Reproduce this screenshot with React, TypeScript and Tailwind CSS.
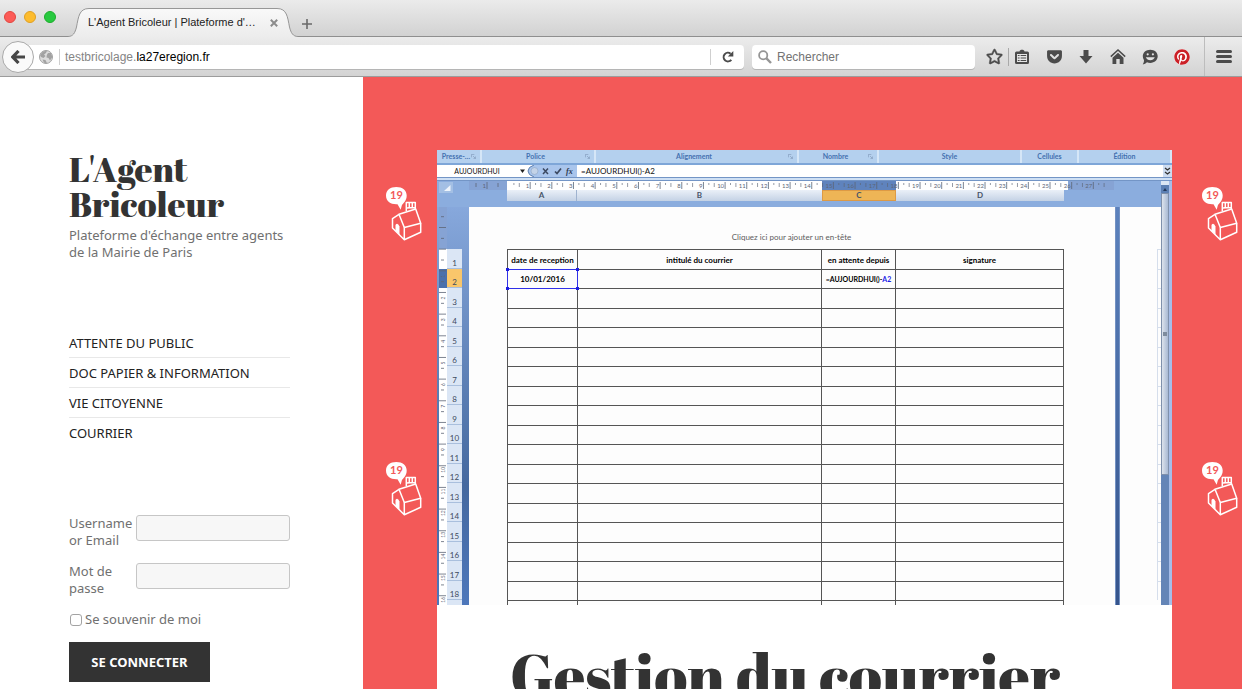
import type { ReactNode } from "react";
import { FaGetPocket, FaPinterest, FaRegStar } from "react-icons/fa";

const sansFont = "font-['Noto_Sans',sans-serif]";
const uiFont = "font-['Liberation_Sans',Arial,sans-serif]";
const titleFont = "font-['Abril_Fatface','Liberation_Serif',serif]";
const sheetFont = "font-['Lato',sans-serif]";

const menu = ["Attente du public", "Doc papier & information", "Vie citoyenne", "Courrier"];

const ribbon = [
  { label: "Presse-…", width: "w-[45px]", launcher: true },
  { label: "Police", width: "w-[114px]", launcher: true },
  { label: "Alignement", width: "w-[203px]", launcher: true },
  { label: "Nombre", width: "w-[80px]", launcher: true },
  { label: "Style", width: "w-[143px]", launcher: false },
  { label: "Cellules", width: "w-[57px]", launcher: false },
  { label: "Édition", width: "flex-1", launcher: false },
];

const rows = Array.from({ length: 18 }, (_, i) => i + 1);
const rowHeight = (n: number) => (n % 2 ? "h-[20px]" : "h-[19px]");

function ToolButton({ label, children }: { label: string; children: ReactNode }) {
  return (
    <button type="button" aria-label={label} className="flex h-6 w-8 shrink-0 items-center justify-center text-[#4b4b4b]">
      {children}
    </button>
  );
}

function TabBar() {
  return (
    <div className="flex h-[37px] shrink-0 items-end border-b border-[#8f8f8f] bg-linear-to-b from-[#ebebeb] to-[#d2d2d2]">
      <div className="flex gap-2 self-start pt-[11px] pl-1">
        <button type="button" aria-label="Fermer la fenêtre" className="size-3 rounded-full border border-[#e2463f] bg-[#fc5b57]" />
        <button type="button" aria-label="Réduire" className="size-3 rounded-full border border-[#dfa023] bg-[#fdbc2e]" />
        <button type="button" aria-label="Agrandir" className="size-3 rounded-full border border-[#1dad2b] bg-[#28c940]" />
      </div>
      <div className="relative -mb-px ml-3 h-[29px] w-[230px]">
        <svg viewBox="0 0 230 29" className="absolute inset-0 size-full" aria-hidden="true">
          <defs>
            <linearGradient id="tab" x1="0" y1="0" x2="0" y2="1">
              <stop offset="0" stopColor="#f9f9f9" />
              <stop offset="1" stopColor="#ececec" />
            </linearGradient>
          </defs>
          <path
            d="M0 28.5C5 28.5 7 25 8.500 19C10.500 9 11 .5 21 .5H209C219 .5 219.500 9 221.500 19C223 25 225 28.500 230 28.500V29H0Z"
            fill="url(#tab)"
          />
          <path
            d="M0 28.5C5 28.5 7 25 8.500 19C10.500 9 11 .5 21 .5H209C219 .5 219.500 9 221.500 19C223 25 225 28.500 230 28.500"
            fill="none"
            stroke="#979797"
          />
        </svg>
        <div className="relative flex h-full items-center pr-4 pl-5">
          <span className="flex-1 text-[11px] whitespace-nowrap text-[#222]">L'Agent Bricoleur | Plateforme d'…</span>
          <button type="button" aria-label="Fermer l'onglet" className="flex size-4 items-center justify-center">
            <svg viewBox="0 0 8 8" className="size-2" aria-hidden="true">
              <path d="M.8 .8L7.200 7.200M7.200 .8L.8 7.200" stroke="#8c8c8c" strokeWidth="2" />
            </svg>
          </button>
        </div>
      </div>
      <button type="button" aria-label="Nouvel onglet" className="mb-[6px] ml-[3px] flex size-3 items-center justify-center">
        <svg viewBox="0 0 10 10" className="size-[10px]" aria-hidden="true">
          <path d="M5 0V10M0 5H10" stroke="#6a6a6a" strokeWidth="1.600" />
        </svg>
      </button>
    </div>
  );
}

function Toolbar() {
  return (
    <div className="flex h-10 shrink-0 items-center border-b border-[#9c9c9c] bg-linear-to-b from-[#ececec] to-[#d3d3d3] pl-[2px]">
      <button
        type="button"
        aria-label="Page précédente"
        className="z-10 flex size-8 shrink-0 items-center justify-center rounded-full border border-[#a9a9a9] bg-[#fafafa]"
      >
        <svg viewBox="0 0 14 14" className="size-[14px]" aria-hidden="true">
          <path d="M7.500 1L1.800 7L7.500 13M2.500 7H14" fill="none" stroke="#474747" strokeWidth="3.200" />
        </svg>
      </button>
      <div className="-ml-3 flex h-6 flex-1 items-center rounded-sm bg-white pl-[17px] shadow-[0_1px_0_#b5b5b5]">
        <svg viewBox="0 0 14 14" className="size-[14px] shrink-0" aria-hidden="true">
          <circle cx="7" cy="7" r="6.500" fill="#dcdcdc" stroke="#a2a2a2" />
          <path d="M1 5L4 1.500L8 .8L7 3L5 4.500L6.500 6L4.500 8L2 7Z" fill="#a2a2a2" />
          <path d="M9 3L12 3L13.300 7L11 10.500L9.500 8L7.500 7.500L7.800 5Z" fill="#a2a2a2" />
          <path d="M3.500 9.500L6.500 10L8 13.200L5 12.800Z" fill="#a2a2a2" />
        </svg>
        <label className="ml-[6px] flex h-full flex-1 items-center">
          <span className="relative flex h-4 w-full items-center border-l border-[#cfcfcf] pl-[5px] text-[12px] leading-4">
            <span aria-hidden="true" className="text-black">
              <span className="text-[#858585]">testbricolage.</span>la27eregion.fr
            </span>
            <input
              aria-label="Adresse"
              defaultValue="testbricolage.la27eregion.fr"
              className="absolute inset-0 w-full bg-transparent pl-[5px] text-transparent outline-none"
            />
          </span>
        </label>
        <button type="button" aria-label="Actualiser" className="flex h-4 w-[34px] items-center justify-center border-l border-[#cfcfcf]">
          <svg viewBox="0 0 12 12" className="size-3" aria-hidden="true">
            <path d="M9.300 8.800A4.300 4.300 0 1 1 8.600 2.700" fill="none" stroke="#4b4b4b" strokeWidth="2" />
            <path d="M11.300 0V5.500H5.800Z" fill="#4b4b4b" />
          </svg>
        </button>
      </div>
      <label className="ml-2 flex h-6 w-[223px] items-center rounded-sm bg-white pl-[6px] shadow-[0_1px_0_#b5b5b5]">
        <svg viewBox="0 0 14 14" className="size-[14px] shrink-0" aria-hidden="true">
          <circle cx="5.200" cy="5.200" r="4.100" fill="none" stroke="#959595" strokeWidth="1.800" />
          <path d="M8.200 8.200L13 13" stroke="#959595" strokeWidth="2.400" />
        </svg>
        <input
          aria-label="Rechercher"
          placeholder="Rechercher"
          className="w-full pl-[5px] text-[12px] outline-none placeholder:text-[#737373]"
        />
      </label>
      <button type="button" aria-label="Marquer cette page" className="ml-[10px] flex h-6 w-[18px] items-center justify-center text-[#4b4b4b]">
        <FaRegStar size={17} className="overflow-visible stroke-current stroke-[16px]" />
      </button>
      <div className="ml-[5px] h-[18px] w-px bg-[#a9a9a9]" />
      <div className="-ml-[3px] flex">
        <ToolButton label="Marque-pages">
          <svg viewBox="0 0 14 15" className="h-[15px] w-[14px]" aria-hidden="true">
            <path d="M4.500 2.500C4.500 .3 9.500 .3 9.500 2.500H12.500Q14 2.500 14 4V13.500Q14 15 12.500 15H1.500Q0 15 0 13.500V4Q0 2.500 1.500 2.500Z" fill="currentColor" />
            <path d="M2 5H12V13H2Z" fill="#e6e6e6" />
            <path d="M2.800 6.500H4.600M5.600 6.500H11.200M2.800 9H4.600M5.600 9H11.200M2.800 11.500H4.600M5.600 11.500H11.200" stroke="currentColor" strokeWidth="1" />
          </svg>
        </ToolButton>
        <ToolButton label="Pocket">
          <FaGetPocket size={17} />
        </ToolButton>
        <ToolButton label="Téléchargements">
          <svg viewBox="0 0 14 14" className="size-[14px]" aria-hidden="true">
            <path d="M4.500 0H9.500V6H13.500L7 13.500L.5 6H4.500Z" fill="currentColor" />
          </svg>
        </ToolButton>
        <ToolButton label="Accueil">
          <svg viewBox="0 0 16 15" className="h-[15px] w-4" aria-hidden="true">
            <path d="M.8 7.600L8 1L15.200 7.600" fill="none" stroke="currentColor" strokeWidth="1.500" />
            <path d="M8 3.800L13.500 8.800V15H9.700V10H6.300V15H2.500V8.800Z" fill="currentColor" />
          </svg>
        </ToolButton>
        <ToolButton label="Discussion">
          <svg viewBox="0 0 16 16" className="size-4" aria-hidden="true">
            <path d="M8.300 .8C12.600 .8 15.700 3.600 15.700 7.300S12.600 13.900 8.300 13.900Q6.500 13.900 5 13.200Q3.300 15.300 .8 15.500Q2.200 13.600 2 11.300Q.8 9.500 .8 7.300C.8 3.600 4 .8 8.300 .8Z" fill="currentColor" />
            <circle cx="5.700" cy="5.300" r="1.100" fill="#e2e2e2" />
            <circle cx="10.900" cy="5.300" r="1.100" fill="#e2e2e2" />
            <path d="M3.800 8.200H12.800Q11.500 11.200 8.300 11.200T3.800 8.200Z" fill="#e2e2e2" />
          </svg>
        </ToolButton>
        <ToolButton label="Pinterest">
          <span className="rounded-full bg-white text-[#cb2027]">
            <FaPinterest size={16} />
          </span>
        </ToolButton>
      </div>
      <div className="ml-[6px] flex h-full items-center border-l border-[#bdbdbd]">
        <button type="button" aria-label="Menu" className="flex h-6 w-[37px] items-center justify-center">
          <svg viewBox="0 0 16 13" className="h-[13px] w-4" aria-hidden="true">
            <path d="M1.500 1.500H14.500M1.500 6.500H14.500M1.500 11.500H14.500" stroke="#4b4b4b" strokeWidth="3" strokeLinecap="round" />
          </svg>
        </button>
      </div>
    </div>
  );
}

function Field({ id, label, type }: { id: string; label: string; type: string }) {
  return (
    <div className="flex items-start">
      <label htmlFor={id} className="w-[67px] shrink-0">
        {label}
      </label>
      <input id={id} type={type} className="h-[26px] w-full min-w-0 rounded-[3px] border border-[#c6c6c6] bg-[#f7f7f7] px-1" />
    </div>
  );
}

function Sidebar() {
  return (
    <aside className="w-[363px] shrink-0 bg-white pr-[73px] pl-[69px] text-[13px] leading-[17px] text-[#707070]">
      <h2 className={`pt-[74px] text-[35px] leading-[35px] text-[#333] ${titleFont}`}>
        <a href="#accueil">L'Agent Bricoleur</a>
      </h2>
      <p className="mt-[6px]">Plateforme d'échange entre agents de la Mairie de Paris</p>
      <nav className="mt-[67px] divide-y divide-[#e8e8e8] text-[#222] uppercase">
        {menu.map((item) => (
          <a key={item} href="#menu" className="block pt-[7px] pb-[5px]">
            {item}
          </a>
        ))}
      </nav>
      <form className="mt-[68px] flex flex-col gap-[14px]" onSubmit={(e) => e.preventDefault()}>
        <Field id="user" label="Username or Email" type="text" />
        <Field id="pass" label="Mot de passe" type="password" />
        <label className="flex items-center gap-[3px]">
          <input type="checkbox" className="ml-px size-3 appearance-none rounded-[3px] border border-[#a3a3a3] bg-white" />
          Se souvenir de moi
        </label>
        <button type="submit" className="h-10 w-[141px] bg-[#333] text-[13px] font-bold text-white uppercase">
          Se connecter
        </button>
      </form>
    </aside>
  );
}

function House() {
  return (
    <svg viewBox="0 0 36 55" className="h-[55px] w-9 shrink-0" aria-hidden="true">
      <path d="M10.300 1C16.500 1 20.700 4.300 20.700 9.600C20.700 15 17 17.500 15.800 19.500L14.700 23.700L11.500 18.300C5 18.800 0 15.500 0 9.600C0 4.300 4.100 1 10.300 1Z" fill="#fff" />
      <text x="10.400" y="13.400" textAnchor="middle" fontSize="11" fontWeight="700" fill="#f35958" className={sheetFont}>
        19
      </text>
      <g fill="none" stroke="#fff" strokeWidth="1.500" strokeLinejoin="round">
        <path d="M20.300 25V16.500H29.300V23M23.300 17V22M26.300 17V22M20.500 22L29 21.500" />
        <path d="M13 28.300L29.700 23L34.700 37.300L18.300 41.500Z" />
        <path d="M13 28.300L6.500 32.700V42L18.300 53.700L34.700 46.300V37.300M18.300 41.500V53.700" />
      </g>
      <path d="M9.500 45V39Q11.500 36 13.500 40.500V49Z" fill="#fff" />
    </svg>
  );
}

function Gutter({ side }: { side: string }) {
  return (
    <div className={`flex shrink-0 flex-col gap-[220px] pt-[109px] ${side}`}>
      <House />
      <House />
    </div>
  );
}

const centimetre = 21.66;

function HorizontalRuler() {
  return (
    <svg width="645" height="9" className="shrink-0" aria-hidden="true">
      <rect width="645" height="9" fill="#86a3d4" />
      <rect x="38" width="561" height="9" fill="#fff" />
      <rect x="353" width="74" height="9" fill="#5f83bd" />
      {Array.from({ length: 28 }, (_, i) => {
        const x = 39.5 + centimetre * i;
        return (
          <g key={i} stroke="#5d6676" strokeWidth=".8">
            {i > 0 && <path d={`M${x} 1V8`} />}
            <path d={`M${x + 5.400} 2V4M${x + 10.800} 2V6`} opacity=".8" />
            {i > 0 && (
              <text x={x - 1} y="7" textAnchor="end" fontSize="6" fill="#5d6676" stroke="none" className={sheetFont}>
                {i}
              </text>
            )}
          </g>
        );
      })}
      <path d="M7 2V6M18 1V8M29 2V6" stroke="#5d6676" strokeWidth=".8" />
      <text x="17" y="7" textAnchor="end" fontSize="6" fill="#5d6676" className={sheetFont}>
        1
      </text>
    </svg>
  );
}

function VerticalRuler() {
  return (
    <svg width="8" height="398" className="shrink-0" aria-hidden="true">
      <rect width="8" height="398" fill="#86a3d4" />
      <rect y="42" width="8" height="356" fill="#fff" />
      <rect y="62" width="8" height="19" fill="#4a70ac" />
      {Array.from({ length: 18 }, (_, i) => {
        const y = 20.5 + centimetre * i;
        return (
          <g key={i} stroke="#5d6676" strokeWidth=".8">
            <path d={`M0 ${y}H7M2 ${y - 10.800}H5`} />
            {i > 1 && (
              <text transform={`translate(6 ${y + 7}) rotate(-90)`} fontSize="5" fill="#5d6676" stroke="none" className={sheetFont}>
                {i - 1}
              </text>
            )}
          </g>
        );
      })}
    </svg>
  );
}

function SheetTable() {
  const cell = "border border-[#555] p-0 align-middle";
  return (
    <table className="w-full table-fixed border-collapse text-center text-[8px] leading-none font-bold text-black">
      <colgroup>
        <col className="w-[70px]" />
        <col />
        <col className="w-[74px]" />
        <col className="w-[168px]" />
      </colgroup>
      <thead>
        <tr className="h-[20px]">
          <th className={cell}>date de reception</th>
          <th className={cell}>intitulé du courrier</th>
          <th className={cell}>en attente depuis</th>
          <th className={cell}>signature</th>
        </tr>
      </thead>
      <tbody>
        <tr className="h-[19px]">
          <td className={`${cell} relative`}>
            10/01/2016
            <span className="absolute -inset-px border border-[#3030e8]" />
            <span className="absolute -top-[2px] -left-[2px] size-[3px] bg-[#1c1ce0]" />
            <span className="absolute -top-[2px] -right-[2px] size-[3px] bg-[#1c1ce0]" />
            <span className="absolute -bottom-[2px] -left-[2px] size-[3px] bg-[#1c1ce0]" />
            <span className="absolute -right-[2px] -bottom-[2px] size-[3px] bg-[#1c1ce0]" />
          </td>
          <td className={cell} />
          <td className={`${cell} text-[7px] whitespace-nowrap`}>
            =AUJOURDHUI()-<span className="text-[#2020e8]">A2</span>
          </td>
          <td className={cell} />
        </tr>
        {[...rows.slice(2), 19].map((n) => (
          <tr key={n} className={rowHeight(n)}>
            <td className={cell} />
            <td className={cell} />
            <td className={cell} />
            <td className={cell} />
          </tr>
        ))}
      </tbody>
    </table>
  );
}

function Spreadsheet() {
  return (
    <figure className={`flex h-[455px] flex-col overflow-hidden bg-[#8badde] ${sheetFont}`}>
      <div className="flex h-[13px] shrink-0 bg-[#e1edf9] text-[7px] leading-[12px] font-bold text-[#4470b0]">
        {ribbon.map((group) => (
          <div key={group.label} className={`flex h-full shrink-0 border-r-2 border-[#d5e6f7] bg-[#b4d0ee] px-1 ${group.width}`}>
            <span className="flex-1 text-center whitespace-nowrap">{group.label}</span>
            {group.launcher && (
              <svg viewBox="0 0 6 6" className="mt-1 size-[5px] shrink-0" aria-hidden="true">
                <path d="M.5 4V.5H4M2.500 2.500L5 5M5.500 3V5.500H3" fill="none" stroke="#7f97b8" strokeWidth=".8" />
              </svg>
            )}
          </div>
        ))}
      </div>
      <div className="h-[2px] shrink-0 bg-[#7ea6d8]" />
      <div className="flex h-[12px] shrink-0 bg-white text-[8px] leading-[12px] text-[#111]">
        <span className="w-[80px] text-center text-[7px]">AUJOURDHUI</span>
        <svg viewBox="0 0 60 12" className="h-3 w-[60px] shrink-0" aria-hidden="true">
          <path d="M3 4.500H8L5.500 8Z" fill="#222" />
          <path d="M60 0H17Q11 2 11 6T17 12H60Z" fill="#a9c5ec" />
          <path d="M17 0Q11 2 11 6T17 12" fill="none" stroke="#5e7fae" />
          <circle cx="17.500" cy="6" r="3.500" fill="#c3d3e8" stroke="#8ea4c2" strokeWidth=".6" />
          <path d="M26 3.500L31 9M31 3.500L26 9" stroke="#3c4961" strokeWidth="1.500" />
          <path d="M38 6.500L40 8.500L44 3.500" fill="none" stroke="#3c4961" strokeWidth="1.700" />
          <text x="49" y="9" fontSize="8" fontStyle="italic" fontWeight="700" fill="#2e3a52" className="font-['Liberation_Serif',serif]">
            fx
          </text>
        </svg>
        <span className="flex-1 pl-1">=AUJOURDHUI()-A2</span>
        <svg viewBox="0 0 9 12" className="h-3 w-[9px]" aria-hidden="true">
          <path d="M0 0H9V12H0Z" fill="#cddcf0" />
          <path d="M2 3L4.500 5L7 3M2 7L4.500 9L7 7" fill="none" stroke="#333" strokeWidth="1.300" />
        </svg>
      </div>
      <div className="h-1 shrink-0 border-y border-[#7395c6] bg-[#cfe0f4]" />
      <div className="flex min-h-0 flex-1">
        <div className="flex min-w-0 flex-1 flex-col">
          <div className="flex h-[26px] shrink-0">
            <div className="w-8 shrink-0 pt-px pl-[2px]">
              <svg viewBox="0 0 14 11" className="h-[11px] w-[14px]" aria-hidden="true">
                <path d="M0 0H14V11H0Z" fill="#a3bfe4" />
                <path d="M11.500 3V9H5Z" fill="#eef4fb" />
              </svg>
            </div>
            <div className="flex min-w-0 flex-1 flex-col overflow-hidden">
              <HorizontalRuler />
              <div className="flex h-[11px] pr-[97px] pl-[38px] text-center text-[8px] leading-[11px] font-bold text-[#475468]">
                <span className="w-[70px] border-r border-[#9fb3cf] bg-linear-to-b from-[#eaf0f8] to-[#c4d2e5]">A</span>
                <span className="flex-1 bg-linear-to-b from-[#eaf0f8] to-[#c4d2e5]">B</span>
                <span className="w-[74px] border border-[#dd9a45] bg-[#eeb556] leading-[9px]">C</span>
                <span className="w-[168px] bg-linear-to-b from-[#eaf0f8] to-[#c4d2e5]">D</span>
              </div>
            </div>
          </div>
          <div className="flex min-h-0 flex-1">
            <div className="flex w-8 shrink-0 overflow-hidden bg-linear-to-b from-[#87a8dc] via-[#45699f] via-70% to-[#4d77bb] pl-[2px]">
              <VerticalRuler />
              <ol className="mt-[42px] w-[15px] text-center text-[8px] text-[#3d4a5e]">
                {rows.map((n) => (
                  <li
                    key={n}
                    className={`flex items-end justify-center border-b border-[#a9bfdd] leading-[9px] ${rowHeight(n)} ${n === 2 ? "bg-[#f9c66b]" : "bg-[#dbe6f5]"}`}
                  >
                    {n}
                  </li>
                ))}
                <li aria-hidden="true" className="h-[5px] bg-[#dbe6f5]" />
              </ol>
            </div>
            <div className="flex-1 overflow-hidden bg-[#fdfdfd] pt-[24px] pr-[51px] pl-[38px]">
              <p className="h-[18px] pl-[12px] text-center text-[8px] leading-[12px] text-[#5c5c5c]">Cliquez ici pour ajouter un en-tête</p>
              <SheetTable />
            </div>
            <div className="w-[5px] shrink-0 border-x border-[#7391c2] bg-linear-to-b from-[#5c82bd] to-[#35548c]" />
            <div className="w-[41px] shrink-0 overflow-hidden bg-[#fdfdfd] pt-[42px] pl-[37px]">
              {rows.map((n) => (
                <div key={n} className={`border-t border-l border-[#d5deec] ${rowHeight(n)}`} />
              ))}
            </div>
          </div>
        </div>
        <div className="flex w-[11px] shrink-0 flex-col border-r-3 border-[#a6bde8] bg-[#6485b7]">
          <div className="h-1 bg-[#dbe6f4]" />
          <div className="flex h-2 items-center justify-center bg-[#5c7fb3]">
            <svg viewBox="0 0 4 3" className="h-[3px] w-1" aria-hidden="true">
              <path d="M0 3L2 0L4 3Z" fill="#24395c" />
            </svg>
          </div>
          <div className="flex h-[282px] items-center justify-center border border-[#7f90ab] bg-linear-to-r from-[#dde3ec] to-[#a9b9d3]">
            <span className="size-1 bg-[#7e8b9d]" />
          </div>
        </div>
      </div>
    </figure>
  );
}

export default function App() {
  return (
    <div className={`flex h-screen flex-col overflow-hidden bg-white ${uiFont}`}>
      <TabBar />
      <Toolbar />
      <div className={`flex min-h-0 flex-1 overflow-hidden ${sansFont}`}>
        <Sidebar />
        <main className="flex min-w-0 flex-1 bg-[#f35958]">
          <Gutter side="w-[74px] pl-[23px]" />
          <article className="mt-[73px] min-w-0 flex-1 bg-white">
            <Spreadsheet />
            <h1 className={`px-[73px] pt-[34px] text-[61px] leading-[72px] whitespace-nowrap text-[#333] ${titleFont}`}>
              Gestion du courrier
            </h1>
          </article>
          <Gutter side="w-[70px] pl-[30px]" />
        </main>
      </div>
    </div>
  );
}
